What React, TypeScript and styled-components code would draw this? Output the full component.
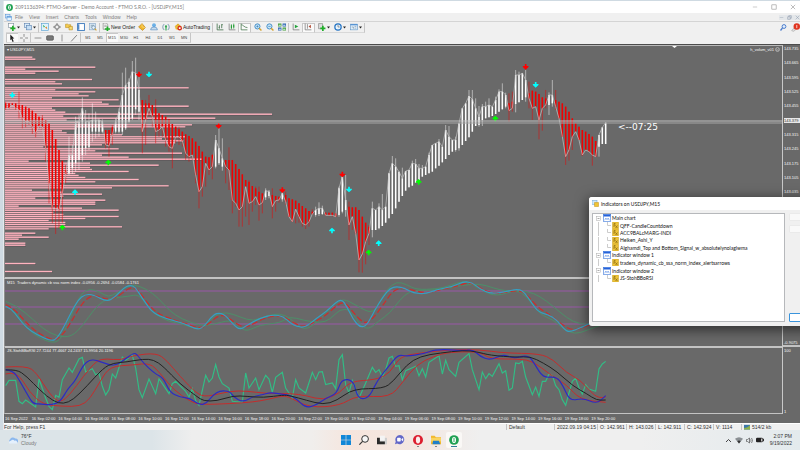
import React from 'react';
import styled, { createGlobalStyle, css } from 'styled-components';

const Global = createGlobalStyle`
  * { box-sizing: border-box; }
  html, body { margin: 0; height: 100%; overflow: hidden; }
  body { font-family: "Liberation Sans", Arial, sans-serif; font-size: 5px; line-height: 6px; color: #333; background: #cfdae2; }
  button { border: 0; padding: 0; margin: 0; background: none; font: inherit; color: inherit; }
  svg { display: block; flex: none; }
`;

/* ---------- shell ---------- */

const Desktop = styled.div`
  height: 100vh;
  display: flex;
  flex-direction: column;
  overflow: hidden;
`;
const AppWindow = styled.main`
  position: relative;
  flex: 1;
  min-height: 0;
  margin: 1px 0 0 3px;
  display: flex;
  flex-direction: column;
  background: #f0f0f0;
  overflow: hidden;
  border-left: 1px solid #e4e9ec;
`;
const TitleBar = styled.header`
  display: flex;
  align-items: center;
  gap: 2px;
  height: 12px;
  padding-left: 2px;
  background: #fff;
  color: #808080;
  flex: none;
`;
const TitleText = styled.h1`
  margin: 0;
  font-family: Lato, "Liberation Sans", sans-serif;
  font-size: 5px;
  font-weight: 400;
  flex: 1;
`;
const WindowActions = styled.div`
  display: flex;
  gap: 13px;
  padding-right: 4px;
  color: #888;
`;
const MenuBar = styled.nav`
  display: flex;
  align-items: center;
  height: 9px;
  padding-left: 1px;
  color: #7c7c7c;
  border-bottom: 1px solid #d4d4d4;
  flex: none;
`;
const MenuItem = styled.button`
  margin-left: 1px;
  padding: 0 3px 0 2px;
`;
const MdiActions = styled.div`
  display: flex;
  gap: 3px;
  margin-left: auto;
  color: #8795a8;
  background: #e4e7ea;
`;
const ToolRow = styled.div<{ $h: number }>`
  display: flex;
  align-items: center;
  height: ${p => p.$h}px;
  padding-left: 2px;
  flex: none;
`;
const ToolGroup = styled.div<{ $start?: boolean }>`
  display: flex;
  align-items: center;
  height: 10px;
  ${p => p.$start && css`padding-left: 1px;`}
  border-right: 1px solid #c6c6c6;
  border-bottom: 1px solid #d8d8d8;
`;
const ToolButton = styled.button<{ $w: number; $on?: boolean }>`
  display: flex;
  align-items: center;
  justify-content: center;
  gap: 1px;
  width: ${p => p.$w}px;
  height: 9px;
  color: #222;
  white-space: nowrap;
  ${p => p.$on && css`background: #fafafa; box-shadow: inset 1px 1px 0 #c8c8c8;`}
`;
const PeriodButton = styled(ToolButton)`
  font-size: 4px;
  color: #444;
`;
const RowEnd = styled.div`
  display: flex;
  align-items: center;
  gap: 4px;
  margin-left: auto;
`;

/* ---------- charts ---------- */

const ChartWindow = styled.section`
  flex: 1;
  min-height: 0;
  display: grid;
  grid-template-columns: 1fr 17px;
  grid-template-rows: 1fr 68px 67px 9px;
  margin-top: 1px;
  border-top: 1px solid #4c4c4c;
  background: #696969;
  color: #f6f6f6;
  font-size: 4px;
  line-height: 5px;
`;
const Panel = styled.div<{ $first?: boolean }>`
  position: relative;
  min-height: 0;
  overflow: hidden;
  border-left: 1px solid #8f8f8f;
  border-right: 1px solid #c8c8c8;
  border-bottom: ${p => (p.$first ? 2 : 1)}px solid #c3c3c3;
  ${p => p.$first && css`border-top: 1px solid #b9b9b9;`}
`;
const Plot = styled.svg`
  width: 100%;
  height: 100%;
`;
const PanelLabel = styled.div`
  position: absolute;
  left: 2px;
  top: 1px;
  white-space: nowrap;
`;
const PanelTag = styled(PanelLabel)`
  left: auto;
  right: 2px;
  display: flex;
  align-items: center;
  gap: 1px;
`;
const Countdown = styled.div`
  position: absolute;
  left: 613px;
  top: 76px;
  font: 9px/11px "DejaVu Sans", sans-serif;
  color: #fff;
`;
const Scale = styled.div<{ $line?: boolean }>`
  display: flex;
  flex-direction: column;
  justify-content: space-between;
  padding: 1px 0 0 1px;
  overflow: hidden;
  white-space: nowrap;
  border-bottom: ${p => (p.$line ? '2px solid #c3c3c3' : '0')};
`;
const Price = styled.span<{ $now?: boolean }>`
  ${p => p.$now && css`background: #e8e8e8; color: #333;`}
`;
const PriceList = styled.div`
  display: grid;
  grid-template-rows: repeat(16, 1fr);
  height: 229px;
  align-items: start;
`;
const TimeAxis = styled.div`
  grid-column: 1 / -1;
  display: grid;
  grid-template-columns: repeat(23, 1fr);
  width: 613px;
  margin-left: 1px;
  padding-top: 2px;
  white-space: nowrap;
`;

/* ---------- dialog ---------- */

const Dialog = styled.section`
  position: absolute;
  right: -60px;
  top: 196px;
  width: 271px;
  height: 129px;
  display: flex;
  flex-direction: column;
  border-radius: 3px;
  background: #f0f0f0;
  overflow: hidden;
  font-family: Lato, "Liberation Sans", sans-serif;
  box-shadow: 0 3px 13px 1px rgba(0, 0, 0, 0.55);
`;
const DialogTitle = styled.h2`
  display: flex;
  align-items: center;
  gap: 2px;
  margin: 0;
  height: 13px;
  padding-left: 3px;
  font-size: 5px;
  font-weight: 400;
  color: #111;
  background: #fff;
`;
const DialogBody = styled.div`
  flex: 1;
  display: flex;
  gap: 4px;
  padding: 3px 3px 4px;
`;
const Tree = styled.ul`
  width: 193px;
  margin: 0;
  padding: 0 0 0 2px;
  list-style: none;
  background: #fff;
  border: 1px solid #b6b8bb;
`;
const TreeRows = styled.div`
  display: grid;
  grid-template-rows: repeat(9, 1fr);
  height: 68px;
`;
const TreeRow = styled.li`
  display: flex;
  align-items: center;
  gap: 1px;
  color: #111;
  white-space: nowrap;
`;
const DialogButtons = styled.div`
  display: flex;
  flex-direction: column;
  gap: 4px;
  flex: 1;
`;
const DialogButton = styled.button<{ $primary?: boolean }>`
  height: 8px;
  background: #f9f9f9;
  border: 1px solid #eaeaea;
  border-radius: 1px;
  ${p => p.$primary && css`
    margin-top: auto;
    height: 9px;
    background: #fff;
    border-color: #3a94dc;
  `}
`;

/* ---------- bottom bars ---------- */

const StatusBar = styled.footer`
  display: flex;
  height: 7px;
  line-height: 6px;
  border-top: 1px solid #fff;
  white-space: nowrap;
  flex: none;
`;
const StatusCell = styled.div<{ $w?: number }>`
  display: flex;
  gap: 2px;
  ${p => (p.$w ? css`width: ${p.$w}px; padding-left: 2px; border-left: 1px solid #c4c4c4;` : css`flex: 1;`)}
`;
const Taskbar = styled.footer`
  display: grid;
  grid-template-columns: 1fr auto 1fr;
  align-items: center;
  height: 20px;
  flex: none;
  background: linear-gradient(90deg, #dce4e8 0, #dce4e8 19%, #eeeeee 24%, #f0eeec 39%, #f6e5dd 44%, #f3e7e1 52%, #efefef 60%, #efefef 80%, #e3eaed 100%);
`;
const Weather = styled.button`
  display: flex;
  align-items: center;
  gap: 3px;
  padding-left: 8px;
  text-align: left;
  line-height: 7px;
`;
const Muted = styled.div`
  color: #777;
`;
const Apps = styled.div`
  display: flex;
  gap: 2px;
`;
const AppButton = styled.button<{ $active?: boolean; $mark?: string }>`
  display: flex;
  flex-direction: column;
  align-items: center;
  justify-content: center;
  gap: 1px;
  width: 16px;
  height: 16px;
  padding-top: 2px;
  border-radius: 2px;
  ${p => p.$active && css`background: #faf8f6;`}
  &::after {
    content: "";
    width: ${p => (p.$active ? 6 : 2)}px;
    height: 1px;
    background: ${p => p.$mark ?? 'transparent'};
  }
`;
const Tray = styled.div`
  display: flex;
  align-items: center;
  justify-content: flex-end;
  gap: 3px;
  padding-right: 8px;
`;
const Clock = styled.time`
  margin-left: 3px;
  text-align: right;
  line-height: 7px;
`;

/* ---------- icons ---------- */

const art: Record<string, React.ReactNode> = {
  newChart: <><rect x="1" y="1" width="9" height="7" fill="#fff" stroke="#789" /><path d="M7 5h3v3h3v3h-3v3H7v-3H4V8h3z" fill="#22ad2b" /></>,
  profiles: <><rect x="1" y="1" width="9" height="7" fill="#d9ebfa" stroke="#567fae" /><rect x="4" y="4" width="9" height="8" fill="#c6dff5" stroke="#567fae" /></>,
  market: <><rect x="1" y="1" width="12" height="12" fill="#dff2fd" stroke="#4898d0" /><path d="M3 3l4 3-2 2z" fill="#28a745" /><path d="M11 11L7 8l3-2z" fill="#e08a2c" /></>,
  target: <><circle cx="7" cy="7" r="4" fill="none" stroke="#777" strokeWidth="1.6" /><path d="M7 0v5M7 9v5M0 7h5M9 7h5" stroke="#777" strokeWidth="1.5" /></>,
  navigator: <><path d="M1 2h4l1 1h4v5H1z" fill="#f4cc4f" stroke="#b98a18" /><path d="M7 6h6v6H7z" fill="#f6da71" stroke="#b98a18" /></>,
  terminal: <><rect x="1" y="1" width="12" height="12" fill="#fff" stroke="#3b79bd" strokeWidth="1.6" /><path d="M3 2v10" stroke="#3b79bd" strokeWidth="2" /></>,
  tester: <><rect x="1" y="1" width="10" height="11" fill="#dbeaf7" stroke="#7aa0c4" /><path d="M3 4h6M3 7h3" stroke="#578" /><circle cx="8" cy="8" r="3" fill="#e6f5ff" stroke="#579" /><path d="M10 10l3 3" stroke="#d8a024" strokeWidth="2" /></>,
  order: <><path d="M2 0h6l2 3v8H2z" fill="#f2f2f2" stroke="#777" /><path d="M4 4h4M4 6h4" stroke="#888" /><path d="M8 6h3v3h3v3h-3v2H8v-2H5V9h3z" fill="#22ad2b" /></>,
  meta: <><path d="M7 1l6 7-5 5-7-6z" fill="#f1b72c" stroke="#b27a12" /><path d="M7 1v6l6 1" fill="none" stroke="#fbe396" /></>,
  cloud: <><circle cx="7" cy="4" r="3.4" fill="#6bb0e6" /><path d="M1 12q0-5 6-5t6 5z" fill="#c7dcee" stroke="#4480bd" /></>,
  signal: <><path d="M4 2a6 6 0 000 10M10 2a6 6 0 010 10" fill="none" stroke="#87a5b8" strokeWidth="1.8" /><circle cx="7" cy="6" r="2" fill="#35a853" /><path d="M7 7v6" stroke="#35a853" strokeWidth="2" /></>,
  auto: <><path d="M1 6l6-5 6 5-6 2z" fill="#e0a820" /><circle cx="6" cy="8" r="4" fill="#e8bc3d" /><circle cx="10" cy="9" r="4" fill="#d6301f" /><path d="M8.500 7.500h3v3h-3z" fill="#fff" /></>,
  bars: <path d="M2 1v11h11M6 4v6M4.500 8H6M10 2v7M10 3h2" fill="none" stroke="#3f6f48" strokeWidth="1.4" />,
  candles: <><path d="M2 1v11h11" fill="none" stroke="#777" strokeWidth="1.3" /><path d="M6 2v9M10 1v9" stroke="#198a2b" /><path d="M5 4h2v5H5zM9 3h2v5H9z" fill="#24a036" /></>,
  line: <path d="M2 1v11h11M2 3c4 0 5 5 11 5" fill="none" stroke="#4b7a52" strokeWidth="1.4" />,
  zoomIn: <><circle cx="6" cy="6" r="4.500" fill="#c7e6fa" stroke="#3382bf" strokeWidth="1.5" /><path d="M6 4v4M4 6h4" stroke="#2470ad" /><path d="M9 9l4 4" stroke="#d5a12c" strokeWidth="2.500" /></>,
  zoomOut: <><circle cx="6" cy="6" r="4.500" fill="#c7e6fa" stroke="#3382bf" strokeWidth="1.5" /><path d="M4 6h4" stroke="#2470ad" /><path d="M9 9l4 4" stroke="#d5a12c" strokeWidth="2.500" /></>,
  tile: <><path d="M0 1h6v5H0zM8 8h6v5H8z" fill="#45a03a" /><path d="M8 1h6v5H8zM0 8h6v5H0z" fill="#2c64b0" /><path d="M1 3h4v2H1zM9 3h4v2H9zM1 10h4v2H1zM9 10h4v2H9z" fill="#d7ecf5" /></>,
  scroll: <><path d="M2 1v11h11" fill="none" stroke="#777" strokeWidth="1.3" /><path d="M5 3l6 3-6 3z" fill="#23a33a" /></>,
  shift: <><path d="M2 1v11h11M6 2v8" fill="none" stroke="#777" strokeWidth="1.3" /><path d="M12 3L8 6l4 3z" fill="#b24a34" /></>,
  indicator: <><path d="M1 1h7v9H1z" fill="#ddd" stroke="#777" /><path d="M7 5h3v3h3v3h-3v3H7v-3H4V8h3z" fill="#1fae29" /></>,
  clock: <><circle cx="7" cy="7" r="5.500" fill="#e8f4fd" stroke="#2574c4" strokeWidth="2.200" /><path d="M7 3v4h3" fill="none" stroke="#555" /></>,
  template: <><rect x="1" y="2" width="12" height="10" fill="#deeffc" stroke="#5d92c2" /><path d="M1 3h12" stroke="#4b8cd1" strokeWidth="2" /><path d="M3 7h3v3M8 6h3M8 9h3" stroke="#789" fill="none" /></>,
  pointer: <path d="M4 1l7 7H8l2 5-2 1-2-5-2 2z" fill="#222" />,
  cross: <path d="M7 0v5M7 9v5M0 7h5M9 7h5" stroke="#777" strokeWidth="1.4" />,
  hline: <path d="M1 7h12" stroke="#777" strokeWidth="1.3" />,
  rect: <rect x="1" y="3" width="12" height="8" rx="2" fill="#777" stroke="#444" />,
  vline: <path d="M7 1v12" stroke="#777" strokeWidth="1.3" />,
  trend: <path d="M2 13L12 2" stroke="#666" strokeWidth="1.4" />,
  search: <><circle cx="8" cy="5" r="3.800" fill="#e3eefb" stroke="#4c7dcc" strokeWidth="2" /><path d="M5 8l-4 5" stroke="#4c7dcc" strokeWidth="2.500" /></>,
  logo: <><circle cx="7" cy="7" r="6.800" fill="#1fa052" /><ellipse cx="7" cy="7" rx="2.800" ry="4.300" fill="#fff" /><path d="M7 4v6" stroke="#1fa052" strokeWidth="1.3" /></>,
  mdi: <><rect x="1" y="1" width="9" height="7" fill="#cfe5fa" stroke="#4d8fd6" /><rect x="4" y="5" width="9" height="8" fill="#e5f2fd" stroke="#4d8fd6" /><path d="M4 6h9" stroke="#4d8fd6" strokeWidth="2" /></>,
  min: <path d="M2 7h10" stroke="currentColor" />,
  max: <rect x="2" y="2" width="10" height="10" fill="none" stroke="currentColor" strokeWidth="1.3" />,
  close: <path d="M2 2l10 10M12 2L2 12" stroke="currentColor" strokeWidth="1.3" />,
  restore: <path d="M5 5V2h7v7H9M2 5h7v7H2z" fill="none" stroke="currentColor" strokeWidth="1.5" />,
  chartWin: <><rect x="0.500" y="1" width="13" height="12" fill="#fff" stroke="#2f6fd8" /><path d="M1 2.500h12" stroke="#2563db" strokeWidth="3.500" /><path d="M3 11l2-4 2 3 2-3 2 4" fill="none" stroke="#4c83df" /></>,
  fx: <><rect x="1" y="0" width="12" height="14" rx="1" fill="#edc33a" stroke="#c49a1a" /><path d="M7 3H4v7M4 6h3M7 7l4 5M11 7l-4 5" fill="none" stroke="#7a5c0c" strokeWidth="1.200" /></>,
  dlg: <><rect x="0" y="1" width="10" height="8" fill="#cfe8fb" stroke="#64a0d6" /><path d="M5 5h8v8H5z" fill="#f0c437" stroke="#c19217" /></>,
  box: <><rect x="3" y="3" width="8" height="8" fill="#fff" stroke="#aaa" /><path d="M5 7h4" stroke="#555" /></>,
  weather: <><path d="M3 11a3 3 0 010-5 4 4 0 017-1 3 3 0 012 6z" fill="#8cb8ee" /><path d="M2 12q-2-3 2-4 3-3 5 0 4-1 4 4z" fill="#e4f0fd" /></>,
  start: <path d="M0 0h6.600v6.600H0zM7.400 0H14v6.600H7.400zM0 7.400h6.600V14H0zM7.400 7.400H14V14H7.400z" fill="#1287d8" />,
  find: <><circle cx="8.500" cy="5.500" r="4.700" fill="#f6f6f6" stroke="#333" strokeWidth="1.400" /><path d="M5 9l-4.500 4.500" stroke="#333" strokeWidth="1.600" /></>,
  task: <><rect x="4" y="4" width="10" height="9" fill="#cfcfcf" /><rect x="4" y="1" width="7" height="7" fill="#f4f4f4" /><path d="M0 4h4v5h7v4H0z" fill="#2a2a2a" /></>,
  chat: <><path d="M7 0a6.500 6.500 0 11-4 12l-3 1 1-4A6.500 6.500 0 017 0z" fill="#6267c8" /><rect x="3" y="4" width="5" height="5" rx="1" fill="#fff" /><path d="M9 6l2.500-2v5L9 7z" fill="#fff" /></>,
  opera: <><circle cx="7" cy="7" r="7" fill="#dc1e2e" /><ellipse cx="7" cy="7" rx="3" ry="4.800" fill="#fbeceb" /></>,
  folder: <><path d="M0 1h5l2 2h7v10H0z" fill="#f2b92e" /><path d="M0 4h14v5H0z" fill="#fad45f" /><path d="M3 8h8l2 5H2z" fill="#1f7fc9" /></>,
  chevron: <path d="M2 10l5-5 5 5" fill="none" stroke="#333" strokeWidth="1.800" />,
  wifi: <><path d="M0 5q7-6 14 0l-7 8z" fill="#8a8f93" /><path d="M4 9q3-2.500 6 0l-3 4z" fill="#333" /></>,
  sound: <path d="M1 5h2l4-3v10L3 9H1zM9 5q2 2 0 4M11 2q4 5 0 10" fill="none" stroke="#444" strokeWidth="1.300" />,
  battery: <><rect x="0" y="3" width="12" height="8" rx="2" fill="#222" /><path d="M13 5v4" stroke="#222" strokeWidth="1.800" /><rect x="9" y="4.500" width="2" height="5" fill="#ddd" /></>,
  badge: <><path d="M1 12l5-6 3 3-5 4z" fill="#ddd" stroke="#aaa" /><circle cx="9" cy="5.500" r="5" fill="#e0341f" /><path d="M9 3v5" stroke="#fff" strokeWidth="1.200" /></>,
  net: <><rect x="0" y="2" width="14" height="11" fill="#3c78ab" /><path d="M0 9q7 1 14-6v10H0z" fill="#8eb24a" /></>,
};

const Icon = ({ name, size = 8 }: { name: string; size?: number }) => (
  <svg width={size} height={size} viewBox="0 0 14 14" aria-hidden="true">{art[name]}</svg>
);
const Caret = () => (
  <svg width="3" height="3" viewBox="0 0 6 6" aria-hidden="true"><path d="M0 1h6L3 5z" fill="#222" /></svg>
);

/* ---------- chart data (units: a third of a pixel) ---------- */

const volume: [number, number][] = [
  [52, 97], [58, 106], [82, 286], [88, 76], [94, 176], [100, 106], [119, 276], [126, 166], [132, 186], [144, 566],
  [150, 166], [156, 286], [162, 236], [168, 266], [174, 156], [180, 356], [187, 306], [193, 326], [199, 566], [205, 156],
  [211, 166], [217, 196], [223, 816], [229, 190], [235, 646], [241, 200], [248, 240], [255, 576], [261, 556], [267, 230],
  [273, 186], [279, 200], [285, 366], [291, 556], [297, 486], [303, 550], [309, 526], [315, 306], [321, 130], [327, 356],
  [333, 286], [340, 546], [346, 306], [352, 386], [358, 606], [364, 86], [370, 270], [376, 476], [383, 270], [389, 276],
  [395, 386], [401, 226], [407, 236], [413, 256], [419, 416], [426, 286], [432, 180], [438, 506], [444, 336], [451, 96],
  [457, 186], [463, 306], [469, 190], [475, 106], [481, 316], [487, 286], [493, 286], [499, 56], [505, 246], [511, 356],
  [518, 160], [524, 190], [530, 356], [536, 256], [542, 146], [548, 196], [554, 196], [561, 366], [567, 146], [580, 106],
  [586, 66], [592, 146], [598, 56], [610, 76], [616, 76], [671, 106], [695, 156],
];

type Run = { dy: number; up: boolean; bars: number[][] };
const runs: Run[] = [
  { dy: 120, up: false, bars: [[190, 205, 185, 210], [190, 205], [190, 195], [190, 205, 190, 210], [195, 210, 155, 235], [195, 235, 195, 265], [200, 245, 200, 262], [205, 245, 205, 255], [212, 260, 212, 282], [220, 280, 220, 292], [230, 258, 230, 265], [235, 260, 225, 270], [240, 325, 240, 365], [250, 430, 250, 490], [270, 505, 270, 550], [297, 505, 297, 582], [330, 510, 330, 565], [362, 460, 362, 548], [390, 402, 375, 430]] },
  { dy: 120, up: true, bars: [[345, 400, 290, 405], [345, 385, 315, 402], [245, 370, 230, 395], [245, 360, 225, 390], [205, 345, 172, 365], [245, 325, 210, 345], [245, 322, 220, 330], [240, 275, 190, 305], [240, 275, 215, 295], [240, 275, 235, 290], [245, 275, 238, 280]] },
  { dy: 120, up: false, bars: [[270, 315, 270, 325], [270, 318, 270, 350], [262, 285, 255, 315]] },
  { dy: 120, up: true, bars: [[245, 275, 235, 280], [215, 275, 205, 280], [165, 275, 98, 285], [135, 265, 83, 270], [125, 245, 115, 250], [95, 235, 63, 240], [100, 208, 53, 225], [150, 215, 110, 240]] },
  { dy: 120, up: false, bars: [[180, 275, 180, 340], [190, 240, 180, 315], [190, 205, 165, 230], [195, 230, 195, 260], [205, 275, 178, 310], [220, 270, 220, 290], [225, 260, 225, 290], [230, 300, 230, 320], [238, 320, 238, 335], [252, 325, 252, 385], [260, 290, 260, 310], [268, 290, 260, 315], [275, 302, 275, 320], [283, 340, 283, 360], [288, 350, 288, 365], [295, 345, 295, 360], [305, 405, 305, 430], [318, 455, 318, 505], [335, 440, 335, 470], [350, 370, 350, 440], [352, 390, 352, 405], [345, 380, 342, 418]] },
  { dy: 330, up: true, bars: [[90, 170, 75, 175], [115, 160, 55, 165], [145, 170, 85, 182]] },
  { dy: 330, up: false, bars: [[150, 170, 150, 220], [150, 180, 112, 240], [150, 270, 150, 310], [162, 280, 162, 290], [177, 300, 177, 350], [193, 290, 193, 350], [210, 230, 210, 320], [215, 280, 210, 345], [228, 275, 228, 305], [235, 260, 230, 285], [245, 285, 230, 332], [250, 278, 250, 310]] },
  { dy: 330, up: true, bars: [[242, 262, 235, 270], [245, 258, 240, 265]] },
  { dy: 330, up: false, bars: [[255, 290, 235, 325], [258, 272, 258, 305], [260, 270, 260, 278]] },
  { dy: 330, up: true, bars: [[250, 268, 245, 275]] },
  { dy: 330, up: false, bars: [[255, 275, 245, 285], [265, 320], [268, 335], [272, 298, 272, 340], [280, 320, 280, 338], [288, 340, 288, 350], [295, 345, 295, 357], [303, 335, 303, 350], [305, 312, 298, 315]] },
  { dy: 330, up: true, bars: [[300, 315, 290, 320], [295, 312, 277, 318], [295, 312, 287, 315]] },
  { dy: 330, up: false, bars: [[308, 316], [308, 316], [308, 316, 308, 320], [310, 320]] },
  { dy: 330, up: true, bars: [[235, 315, 230, 320], [200, 305, 195, 310], [270, 300, 195, 320]] },
  { dy: 330, up: false, bars: [[290, 345, 275, 390], [292, 320, 292, 360], [292, 370, 292, 375], [300, 450, 300, 487], [320, 432, 320, 488], [338, 395, 338, 463], [350, 370, 345, 405]] },
  { dy: 330, up: true, bars: [[295, 360, 275, 382], [300, 360], [290, 355, 280, 358], [300, 348, 252, 348], [290, 338], [190, 325], [160, 312, 138, 312], [170, 295, 145, 295], [185, 275], [205, 258, 173, 258]] },
  { dy: 120, up: true, bars: [[393, 452], [390, 442], [370, 437, 362, 437], [372, 428, 357, 428], [385, 420, 372, 420], [385, 410, 375, 410], [380, 405], [345, 400, 338, 400], [315, 395], [310, 385], [305, 377, 297, 377], [320, 367], [270, 357, 255, 357], [290, 345, 258, 345], [300, 335], [300, 330, 290, 335], [250, 325, 250, 332], [205, 315], [190, 303], [168, 292, 150, 292], [178, 275, 150, 275], [205, 258, 175, 258], [230, 255, 198, 260], [200, 240, 192, 258], [200, 235, 185, 235], [195, 232, 175, 232], [200, 228], [180, 222, 170, 222], [155, 215, 148, 215], [155, 208, 130, 208], [165, 200, 158, 205]] },
  { dy: 120, up: false, bars: [[190, 212, 160, 245], [185, 205, 155, 215]] },
  { dy: 120, up: true, bars: [[105, 192, 90, 217], [105, 187, 95, 187], [100, 180], [120, 172, 90, 185]] },
  { dy: 120, up: false, bars: [[160, 175, 125, 205], [152, 205, 152, 240], [155, 200], [162, 240, 162, 298], [172, 205, 172, 272], [175, 195, 150, 205]] },
  { dy: 120, up: true, bars: [[165, 195, 157, 225], [165, 190, 120, 200]] },
  { dy: 120, up: false, bars: [[180, 200, 150, 210], [185, 235], [190, 290], [200, 350, 200, 375], [215, 330, 215, 362], [235, 290, 235, 330], [250, 275], [260, 300], [270, 345, 270, 348], [275, 330], [282, 335], [290, 345, 290, 377], [303, 350]] },
  { dy: 120, up: true, bars: [[285, 320, 285, 350], [262, 312], [248, 312]] },
];

const candles = runs
  .flatMap(r => r.bars.map(([a, b, c = a, d = b]) => ({ up: r.up, top: a + r.dy, bottom: b + r.dy, high: c + r.dy, low: d + r.dy })))
  .map((c, i) => ({ ...c, x: 17 + i * 10 }));
const closeLine = candles.map(c => `${c.x},${c.up ? c.top : c.bottom}`).join(' ');

const arrows: [number, number, string, boolean][] = [
  [37, 285, '#00ffff', false], [417, 223, '#ff0000', false], [447, 223, '#00ffff', false], [325, 488, '#00ff00', true],
  [225, 577, '#00ffff', true], [187, 683, '#00ff00', true], [656, 377, '#ff0000', false], [847, 570, '#ff0000', false],
  [1027, 523, '#ff0000', false], [1047, 568, '#00ffff', false], [996, 692, '#00ffff', true], [1106, 758, '#00ff00', true],
  [1136, 730, '#00ffff', true], [1256, 546, '#00ff00', true], [1486, 356, '#00ff00', true], [1577, 200, '#ff0000', false],
  [1607, 254, '#00ffff', false],
];

/* Joins two halves of a series; the second half starts 870 units to the right. */
const series = (a: string, b: string) => {
  const shift = b.split(' ').map(p => p.split(',').map(Number)).map(([x, y]) => `${x + 870},${y}`);
  return a.split(' ').filter(p => Number(p.split(',')[0]) < 870 + Number(b.split(',')[0])).concat(shift).join(' ');
};
/* Rounds the corners of a point list with quadratic segments. */
const smooth = (pts: string) => {
  const p = pts.split(' ').map(s => s.split(',').map(Number));
  let d = `M${p[0]}`;
  for (let i = 1; i < p.length - 1; i++) d += ` Q${p[i]} ${(p[i][0] + p[i + 1][0]) / 2},${(p[i][1] + p[i + 1][1]) / 2}`;
  return `${d} L${p[p.length - 1]}`;
};

const norm = {
  fast: series('17,100 35,108 55,135 80,165 110,185 155,205 172,195 190,165 215,115 235,80 255,64 280,65 320,86 345,73 370,45 390,36 405,42 420,65 440,95 460,120 500,138 550,150 590,170 610,163 640,125 660,119 680,130 700,155 720,170 740,158 780,135 820,125 850,130 880,155', '0,150 20,160 45,164 80,135 110,115 135,90 155,78 170,100 190,140 210,163 230,158 255,110 280,70 300,46 320,40 345,46 370,60 405,63 440,50 490,40 520,26 545,28 570,48 600,62 640,58 685,47 705,60 725,90 745,117 775,125 800,140 825,172 840,177 870,165 900,152 928,136'),
  slow: series('17,95 40,105 75,145 110,178 160,203 185,190 215,145 240,100 265,72 290,66 325,82 355,70 385,46 405,43 425,65 450,100 475,123 520,140 560,152 600,168 630,150 655,127 680,129 705,150 735,165 765,150 800,132 840,127 870,140', '0,142 35,163 70,150 110,125 150,88 170,92 195,125 225,154 250,135 280,95 305,58 330,44 370,52 410,61 450,50 500,40 535,28 560,38 590,55 620,63 690,50 715,70 745,105 780,125 810,150 840,170 870,168 905,152 930,138'),
  upper: series('17,97 45,115 70,150 100,185 150,209 178,205 200,160 225,100 245,60 270,47 300,57 325,73 350,60 380,42 400,34 440,48 475,75 510,115 545,138 600,158 640,155 690,140 715,160 740,176 780,155 840,150', '0,130 40,142 90,150 120,140 150,108 180,110 210,155 235,170 265,145 300,120 330,80 360,53 400,52 450,50 520,36 570,32 610,45 650,55 710,53 750,70 790,100 830,135 870,155 930,152'),
  lower: series('17,85 50,98 100,140 130,168 170,190 215,192 250,155 280,112 310,82 345,74 385,70 415,64 440,95 465,125 510,147 550,153 590,170 620,158 645,125 680,117 720,132 760,145 800,128 840,121', '0,135 25,160 50,170 90,140 130,95 160,76 200,98 245,122 265,95 290,50 320,25 350,35 380,50 440,48 480,38 520,23 550,35 580,55 620,70 680,50 710,70 750,125 790,140 820,168 855,184 890,172 945,152'),
};
const stoch = {
  raw: series('17,338 27,322 47,322 57,385 67,392 77,381 107,402 117,318 137,375 147,400 157,410 167,367 177,373 187,320 207,285 217,298 237,258 247,253 257,297 277,287 287,305 297,300 307,340 317,366 327,350 337,303 347,315 367,252 377,262 397,247 407,285 417,350 427,374 447,318 467,362 477,318 487,332 507,362 517,332 527,325 557,355 567,372 577,347 587,383 597,397 617,307 627,327 637,315 647,275 657,312 667,332 687,345 697,385 727,388 737,300 747,345 767,315 777,350 797,307 807,318 817,358 827,313 847,298 857,345 867,360', '7,375 17,320 27,345 47,360 67,298 77,320 87,297 97,296 107,335 127,330 137,347 147,260 157,245 167,335 177,360 187,322 207,375 227,330 247,283 257,298 267,290 277,312 287,290 297,255 307,250 317,280 327,278 337,320 347,293 377,280 387,308 397,287 407,312 417,268 447,248 457,303 467,262 477,290 497,310 507,268 537,242 547,290 567,350 577,297 587,317 597,302 607,310 627,272 637,300 647,293 657,352 667,345 677,270 687,272 697,265 707,312 727,365 737,342 747,370 757,325 767,325 777,303 787,307 797,338 807,350 817,380 827,397 837,360 847,325 857,315 867,345 877,363 887,335 897,348 917,355 927,288 937,273 947,265'),
  blue: series('17,290 40,293 60,325 85,370 100,393 120,392 150,396 180,388 205,345 225,325 250,275 270,260 290,262 310,270 340,278 360,270 400,240 410,243 430,270 465,302 490,315 510,358 540,373 570,375 600,397 620,390 640,365 660,353 690,355 700,372 730,388 760,370 790,365 810,358 850,364', '0,367 20,378 45,403 70,400 110,375 140,362 155,318 190,322 200,365 215,380 240,370 260,325 300,275 325,245 350,250 400,243 440,228 520,233 550,230 570,250 600,262 640,243 670,257 715,245 735,275 760,315 800,310 820,340 840,384 880,375 920,393 947,368'),
  base: series('17,291 50,289 80,310 120,352 160,385 190,393 220,380 260,340 310,285 340,270 380,267 430,258 460,260 490,280 540,333 590,370 610,384 650,384 700,368 740,370 790,374 850,366', '0,368 50,382 100,395 140,383 190,347 280,347 310,325 350,275 390,250 450,240 520,232 560,236 600,247 680,253 720,250 760,270 800,295 850,340 890,362 920,382 947,381'),
  high: series('17,282 80,278 110,300 150,365 180,390 210,365 250,310 290,262 320,257 360,262 400,247 470,240 500,262 540,310 590,362 620,372 690,354 740,354 800,362', '0,361 50,368 100,382 150,360 180,325 260,320 300,300 330,250 390,240 480,230 570,230 640,240 750,242 790,260 830,300 870,320 910,365 930,375 947,372'),
  low: series('17,303 50,293 90,360 130,395 190,400 240,400 270,378 300,325 330,280 400,276 450,270 480,300 520,350 570,385 600,395 690,392 760,387 800,380 850,368', '0,374 60,404 150,398 200,367 300,374 340,325 380,275 430,250 480,237 570,236 600,258 690,258 730,265 780,305 830,335 870,380 947,388'),
};

const prices = ['143.735', '143.665', '143.595', '143.525', '143.455', '143.379', '143.315', '143.245', '143.175', '143.105', '143.035'];
const hours = ['02', '04', '06', '08', '10', '12', '14', '16', '18', '20', '22'];
const times = ['16 Sep 2022', ...hours.map(h => `16 Sep ${h}:00`), '19 Sep 00:00', ...hours.slice(0, 10).map(h => `19 Sep ${h}:00`)];

const tree: [number, string][] = [
  [0, 'Main chart'], [1, 'QFF-CandleCountdown'], [1, 'ACC9BALcMARG-INDI'], [1, 'Heiken_Ashi_Y'],
  [1, 'Alghamdi_Top and Bottom_Signal_w_absolutelynolaglwma'], [0, 'Indicator window 1'],
  [1, 'traders_dynamic_cb_ssa_norm_index_alertsarrows'], [0, 'Indicator window 2'], [1, 'JS-StohBBoRSI'],
];

const apps: { name: string; mark?: string; active?: boolean }[] = [
  { name: 'start' }, { name: 'find' }, { name: 'task' }, { name: 'chat' },
  { name: 'opera', mark: '#888' }, { name: 'folder', mark: '#888' }, { name: 'logo', mark: '#2f7f96', active: true },
];

const Tools = ({ names, on = [] }: { names: string[]; on?: string[] }) => (
  <>{names.map(n => <ToolButton key={n} $w={12} $on={on.includes(n)} aria-label={n}><Icon name={n} size={8} /></ToolButton>)}</>
);
const DropTool = ({ name }: { name: string }) => (
  <ToolButton $w={16} aria-label={name}><Icon name={name} size={8} /><Caret /></ToolButton>
);

const MainPlot = () => (
  <Plot aria-label="USDJPY price chart">
    <g transform="translate(-5 -46) scale(.333333)">
      {volume.map(([y, x]) => (
        <g key={y}>
          <rect x="15" y={y + 117.5} width={x - 15} height="4.300" fill="#ffb3bf" />
          <rect x="15" y={y + 121.8} width={x - 13} height="1.800" fill="#4d4046" opacity=".55" />
        </g>
      ))}
      {candles.map(c => (
        <g key={c.x} stroke={c.up ? '#fff' : '#f00000'}>
          <path d={`M${c.x} ${c.high}V${c.low}`} strokeWidth="2.500" opacity=".6" />
          <path d={`M${c.x} ${c.top}V${c.bottom}`} strokeWidth="4.500" />
        </g>
      ))}
      <polyline points={closeLine} fill="none" stroke="#c8c8c8" strokeWidth="2.500" opacity=".8" />
      {arrows.map(([x, y, fill, up]) => (
        <path key={`${x}-${y}`} transform={`translate(${x} ${y}) scale(1 ${up ? -1 : 1})`} d="M-2.500-8h5v6h6v3L0 9l-8.500-8v-3h6z" fill={fill} />
      ))}
    </g>
    <path d="M667 0h5l-2.500 2z" fill="#fff" />
    <line x1="0" x2="100%" y1="75" y2="75" stroke="#c0c0c0" />
    <line x1="0" x2="100%" y1="77" y2="77" stroke="#a8a8a8" />
  </Plot>
);

export default function App() {
  return (
    <Desktop>
      <Global />
      <AppWindow>
        <TitleBar>
          <Icon name="logo" size={7} />
          <TitleText>2091136394: FTMO-Server - Demo Account - FTMO S.R.O. - [USDJPY,M15]</TitleText>
          <WindowActions>
            {['min', 'max', 'close'].map(n => <button key={n} aria-label={n}><Icon name={n} size={6} /></button>)}
          </WindowActions>
        </TitleBar>
        <MenuBar>
          <Icon name="mdi" size={7} />
          {['File', 'View', 'Insert', 'Charts', 'Tools', 'Window', 'Help'].map(m => <MenuItem key={m}>{m}</MenuItem>)}
          <MdiActions>
            {['min', 'restore', 'close'].map(n => <button key={n} aria-label={`chart ${n}`}><Icon name={n} size={5} /></button>)}
          </MdiActions>
        </MenuBar>
        <ToolRow $h={11}>
          <ToolGroup><DropTool name="newChart" /><DropTool name="profiles" /></ToolGroup>
          <ToolGroup><Tools names={['market', 'target', 'navigator', 'terminal', 'tester']} /></ToolGroup>
          <ToolGroup $start>
            <ToolButton $w={35}><Icon name="order" size={8} />New Order</ToolButton>
            <Tools names={['meta', 'cloud', 'signal']} />
            <ToolButton $w={40}><Icon name="auto" size={8} />AutoTrading</ToolButton>
          </ToolGroup>
          <ToolGroup $start><Tools names={['bars', 'candles', 'line']} on={['line']} /></ToolGroup>
          <ToolGroup $start><Tools names={['zoomIn', 'zoomOut', 'tile']} /></ToolGroup>
          <ToolGroup $start><Tools names={['scroll', 'shift']} on={['shift']} /></ToolGroup>
          <ToolGroup $start><DropTool name="indicator" /><DropTool name="clock" /><DropTool name="template" /></ToolGroup>
          <RowEnd><Icon name="search" size={7} /><Icon name="badge" size={9} /></RowEnd>
        </ToolRow>
        <ToolRow $h={10}>
          <ToolGroup><Tools names={['pointer', 'cross']} on={['pointer']} /></ToolGroup>
          <ToolGroup $start><Tools names={['hline', 'rect', 'vline', 'trend']} /></ToolGroup>
          <ToolGroup $start>
            {['M1', 'M5', 'M15', 'M30', 'H1', 'H4', 'D1', 'W1', 'MN'].map(p => <PeriodButton key={p} $w={12} $on={p === 'M15'}>{p}</PeriodButton>)}
          </ToolGroup>
        </ToolRow>

        <ChartWindow>
          <Panel $first>
            <MainPlot />
            <PanelLabel>▾ USDJPY,M15</PanelLabel>
            <PanelTag>h_volum_v01
              <svg width="5" height="5" viewBox="0 0 10 10"><circle cx="5" cy="5" r="4" fill="none" stroke="#ddd" /><circle cx="3.500" cy="4" r=".8" fill="#eee" /><circle cx="6.500" cy="4" r=".8" fill="#eee" /><path d="M3 7q2-2 4 0" fill="none" stroke="#eee" /></svg>
            </PanelTag>
            <Countdown>&lt;--07:25</Countdown>
          </Panel>
          <Scale $line>
            <PriceList>{prices.map(p => <Price key={p} $now={p === '143.379'}>{p}</Price>)}</PriceList>
          </Scale>
          <Panel>
            <Plot aria-label="Traders dynamic norm index">
              {[12, 28, 45].map(y => <line key={y} x1="0" x2="100%" y1={y} y2={y} stroke="#9a58a8" />)}
              <g transform="translate(-5 -281) scale(.333333) translate(0 825)" fill="none" strokeWidth="3">
                <path d={smooth(norm.upper)} stroke="#4c9068" />
                <path d={smooth(norm.lower)} stroke="#4c9068" />
                <path d={smooth(norm.slow)} stroke="#cf2b2b" strokeDasharray="18 8" strokeWidth="3.500" />
                <path d={smooth(norm.fast)} stroke="#35a0c4" strokeWidth="3.500" />
              </g>
            </Plot>
            <PanelLabel>M15 &nbsp;Traders dynamic cb ssa norm index -0.0956 -0.2694 -0.0584 -0.1761</PanelLabel>
          </Panel>
          <Scale $line><span>1.0</span><Price>-0.9075</Price></Scale>
          <Panel>
            <Plot aria-label="JS-StohBBoRSI">
              <line x1="0" x2="100%" y1="0" y2="0" stroke="#c3c3c3" strokeWidth="2" />
              <g transform="translate(-5 -349) scale(.333333) translate(0 825)" fill="none" strokeWidth="3">
                <polyline points={stoch.raw} stroke="#32bd86" strokeWidth="3.500" />
                <path d={smooth(stoch.high)} stroke="#c52c2c" />
                <path d={smooth(stoch.low)} stroke="#c52c2c" />
                <path d={smooth(stoch.blue)} stroke="#2b2bc4" strokeWidth="3.500" />
                <path d={smooth(stoch.base)} stroke="#222" />
              </g>
            </Plot>
            <PanelLabel>JS-StohBBoRSI 27.7244 77.4667 24.2437 15.9956 20.1196</PanelLabel>
          </Panel>
          <Scale><span>100</span><span>1</span></Scale>
          <TimeAxis>{times.map(t => <span key={t}>{t}</span>)}</TimeAxis>
        </ChartWindow>

        <StatusBar>
          <StatusCell>For Help, press F1</StatusCell>
          <StatusCell $w={48}>Default</StatusCell>
          <StatusCell $w={43}>2022.09.19 04:15</StatusCell>
          <StatusCell $w={29}>O: 142.961</StatusCell>
          <StatusCell $w={29}>H: 143.026</StatusCell>
          <StatusCell $w={29}>L: 142.911</StatusCell>
          <StatusCell $w={29}>C: 142.924</StatusCell>
          <StatusCell $w={28}>V: 1114</StatusCell>
          <StatusCell $w={59}><Icon name="net" size={6} />514/2 kb</StatusCell>
        </StatusBar>

        <Dialog role="dialog" aria-labelledby="dialog-title">
          <DialogTitle id="dialog-title"><Icon name="dlg" size={7} />Indicators on USDJPY,M15</DialogTitle>
          <DialogBody>
            <Tree>
              <TreeRows>
                {tree.map(([level, label]) => (
                  <TreeRow key={label}>
                    {level === 0 ? (
                      <><Icon name="box" size={7} /><Icon name="chartWin" size={8} /></>
                    ) : (
                      <>
                        <svg width="16" height="7" viewBox="0 0 16 7"><path d="M3.500 0v7M12.500 0v3.500h4" fill="none" stroke="#ccc" /></svg>
                        <Icon name="fx" size={7} />
                      </>
                    )}
                    {label}
                  </TreeRow>
                ))}
              </TreeRows>
            </Tree>
            <DialogButtons>
              <DialogButton aria-label="Edit" disabled />
              <DialogButton aria-label="Delete" disabled />
              <DialogButton aria-label="Close" $primary />
            </DialogButtons>
          </DialogBody>
        </Dialog>
      </AppWindow>

      <Taskbar>
        <Weather><Icon name="weather" size={10} /><span>76°F<Muted>Cloudy</Muted></span></Weather>
        <Apps>
          {apps.map(a => (
            <AppButton key={a.name} $active={a.active} $mark={a.mark} aria-label={a.name}><Icon name={a.name} size={10} /></AppButton>
          ))}
        </Apps>
        <Tray>
          <Icon name="chevron" size={7} /><Icon name="wifi" size={8} /><Icon name="sound" size={7} /><Icon name="battery" size={8} />
          <Clock>2:07 PM<br />9/19/2022</Clock>
        </Tray>
      </Taskbar>
    </Desktop>
  );
}
